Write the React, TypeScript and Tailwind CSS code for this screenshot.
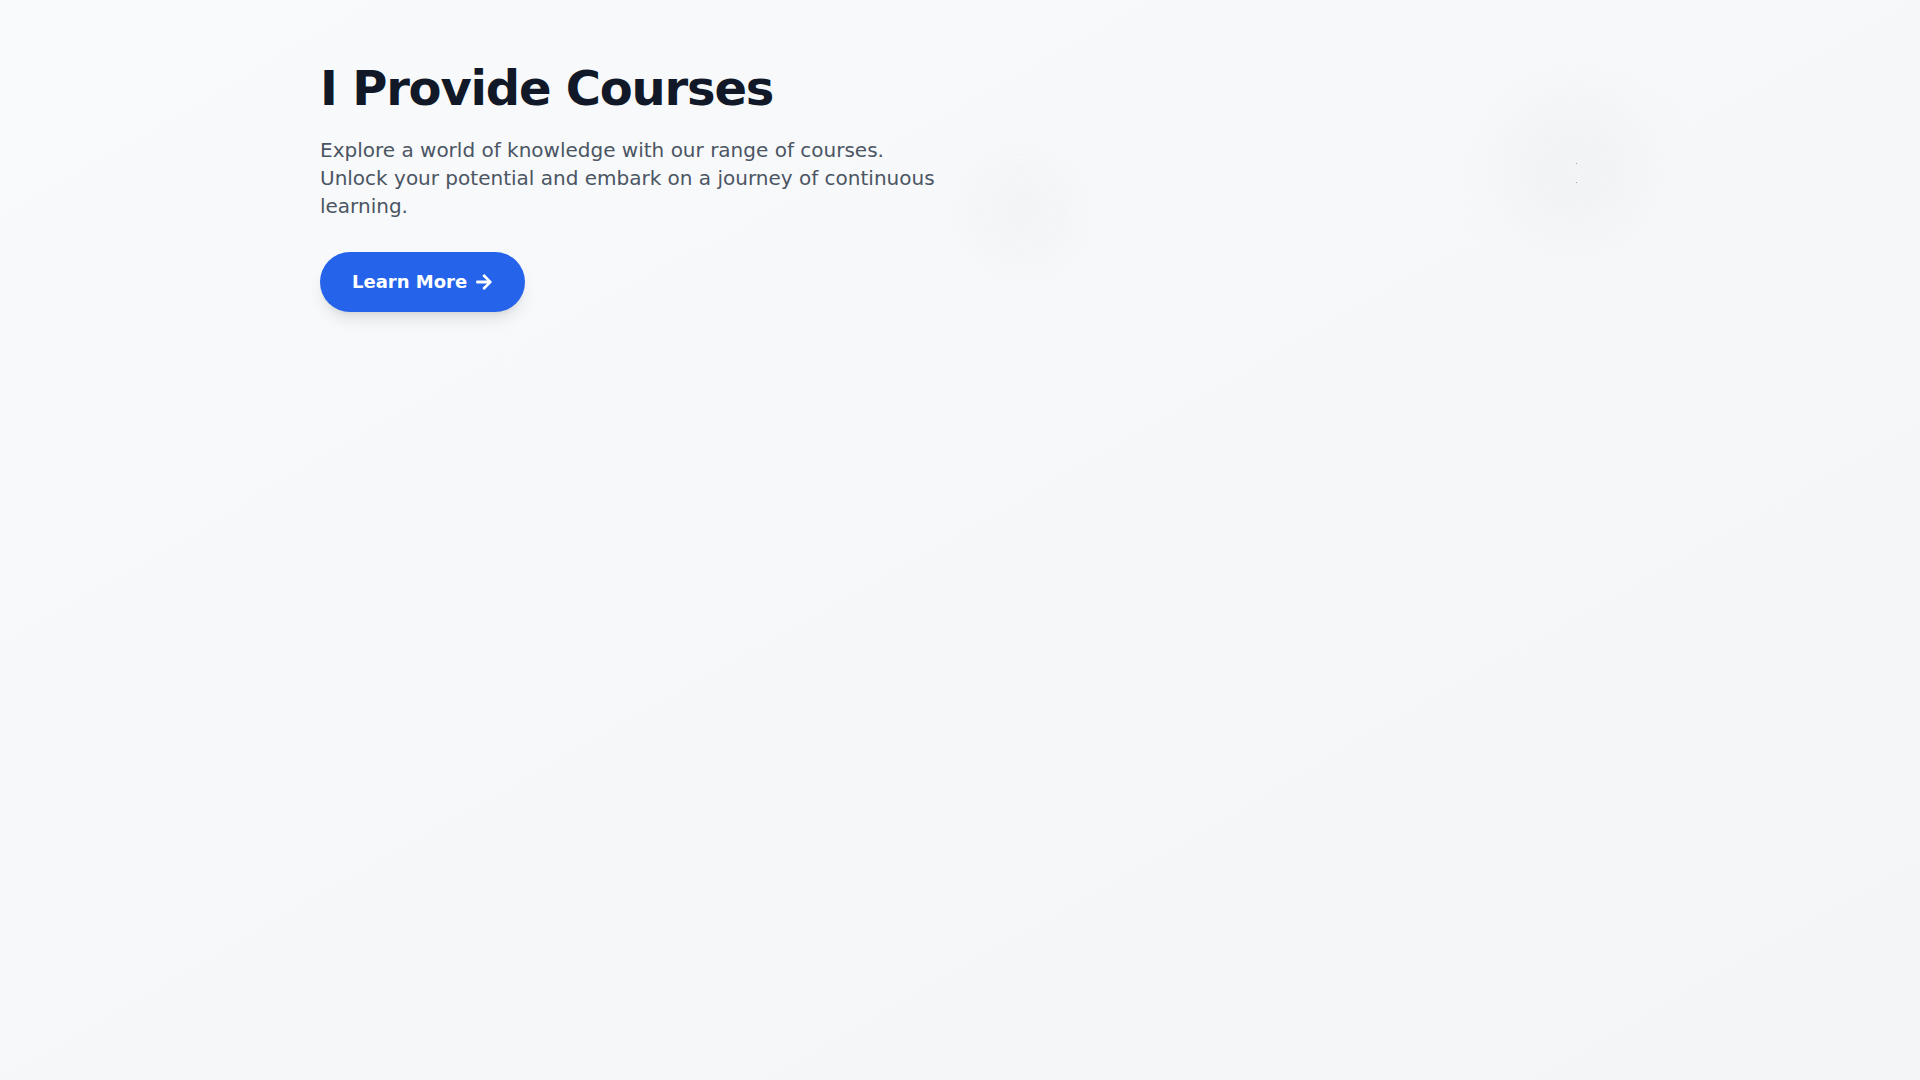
import { FaArrowRight } from "react-icons/fa";

export default function App() {
  return (
    <div
      className="min-h-screen w-full overflow-hidden bg-gradient-to-br from-[#f9fafb] to-[#f4f5f7]"
      style={{ fontFamily: '"DejaVu Sans", "Noto Sans", sans-serif' }}
    >
      <section className="mx-auto grid max-w-7xl grid-cols-2 gap-8 pt-16">
        {/* Text column */}
        <div>
          <h1 className="mb-6 text-5xl font-bold tracking-tight text-[#111827]">
            I Provide Courses
          </h1>
          <p className="text-xl leading-7 text-[#4b5563]">
            Explore a world of knowledge with our range of courses. Unlock your
            potential and embark on a journey of continuous learning.
          </p>
          <button className="mt-8 flex items-center gap-2 rounded-full bg-[#2563eb] px-8 py-4 text-lg font-bold text-white shadow-lg">
            Learn More
            <FaArrowRight />
          </button>
        </div>

        {/* Visual column (faint decorative blobs) */}
        <div className="relative h-[260px]">
          <div className="pointer-events-none absolute left-[0px] top-[101px] h-[90px] w-[90px] rounded-full bg-gray-200/25 blur-xl" />
          <div className="pointer-events-none absolute left-[530px] top-[36px] h-[135px] w-[135px] rounded-full bg-gray-200/25 blur-xl" />
          <span className="pointer-events-none absolute left-[600px] top-[99px] h-px w-px bg-gray-400" />
          <span className="pointer-events-none absolute left-[600px] top-[118px] h-px w-px bg-gray-400" />
        </div>
      </section>
    </div>
  );
}
